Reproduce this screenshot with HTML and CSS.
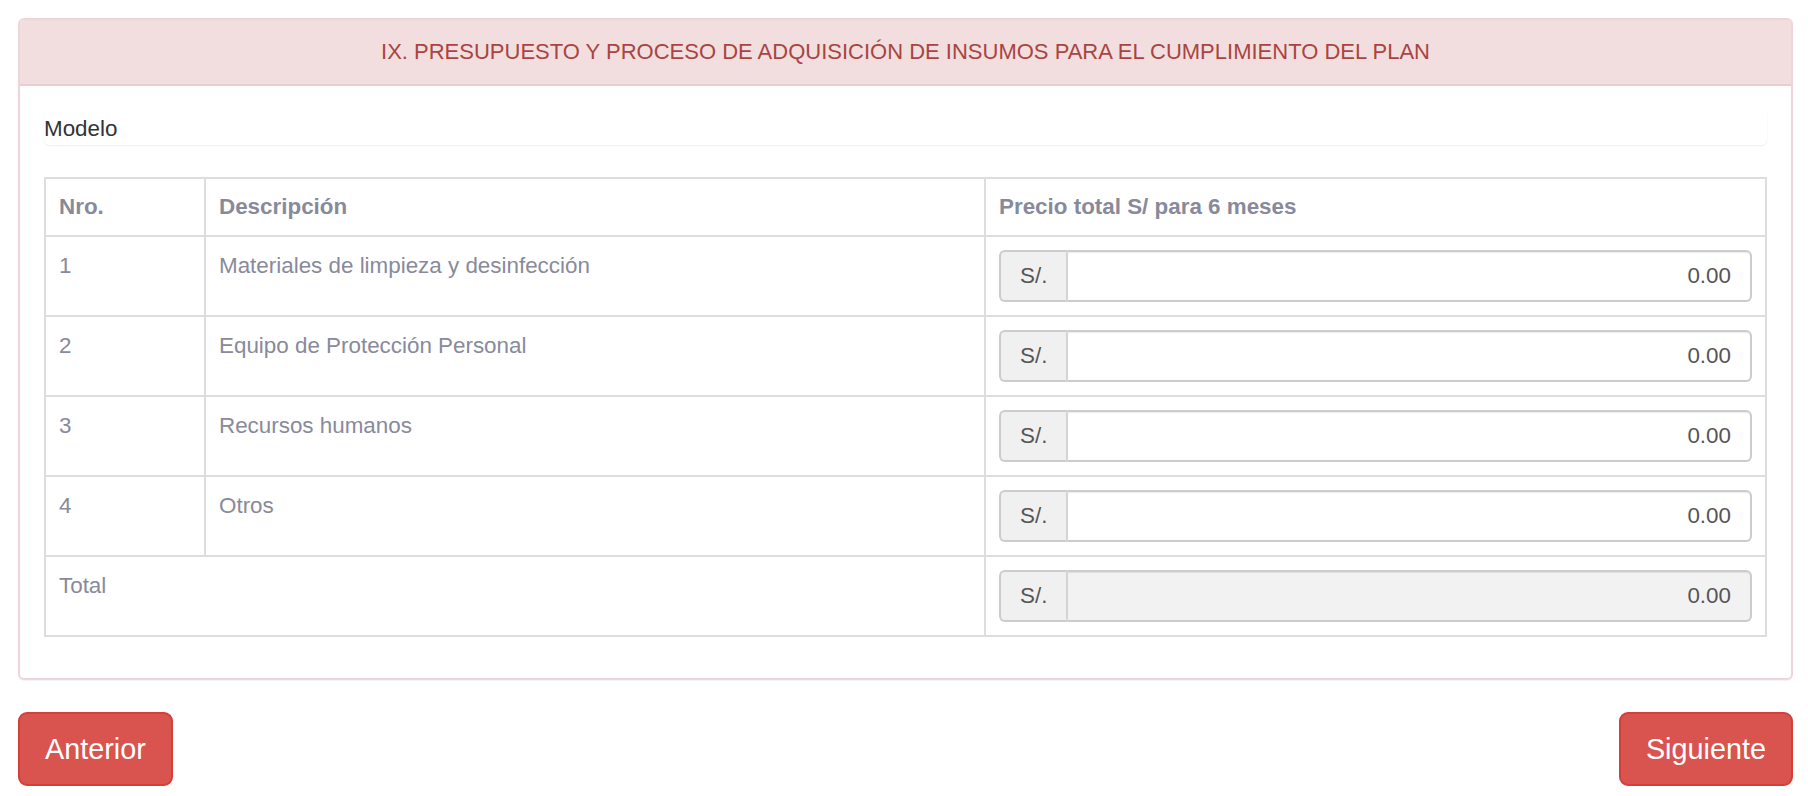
FILE: index.html
```html
<!DOCTYPE html>
<html lang="es">
<head>
    <meta charset="UTF-8">
    <meta name="viewport" content="width=device-width, initial-scale=1.0">
    <title>Presupuesto</title>
    <link rel="stylesheet" href="styles.css">
</head>
<body>
    <div class="page">
        <div class="panel panel-danger">
            <div class="panel-heading">IX. PRESUPUESTO Y PROCESO DE ADQUISICIÓN DE INSUMOS PARA EL CUMPLIMIENTO DEL PLAN</div>
            <div class="panel-body">
                <div class="model-box">Modelo</div>

                <table class="budget-table">
                    <thead>
                        <tr>
                            <th class="col-nro">Nro.</th>
                            <th class="col-desc">Descripción</th>
                            <th class="col-price">Precio total S/ para 6 meses</th>
                        </tr>
                    </thead>
                    <tbody>
                        <tr>
                            <td>1</td>
                            <td>Materiales de limpieza y desinfección</td>
                            <td>
                                <div class="input-group">
                                    <span class="input-group-addon">S/.</span>
                                    <input class="form-control" type="text" value="0.00">
                                </div>
                            </td>
                        </tr>
                        <tr>
                            <td>2</td>
                            <td>Equipo de Protección Personal</td>
                            <td>
                                <div class="input-group">
                                    <span class="input-group-addon">S/.</span>
                                    <input class="form-control" type="text" value="0.00">
                                </div>
                            </td>
                        </tr>
                        <tr>
                            <td>3</td>
                            <td>Recursos humanos</td>
                            <td>
                                <div class="input-group">
                                    <span class="input-group-addon">S/.</span>
                                    <input class="form-control" type="text" value="0.00">
                                </div>
                            </td>
                        </tr>
                        <tr>
                            <td>4</td>
                            <td>Otros</td>
                            <td>
                                <div class="input-group">
                                    <span class="input-group-addon">S/.</span>
                                    <input class="form-control" type="text" value="0.00">
                                </div>
                            </td>
                        </tr>
                        <tr>
                            <td colspan="2">Total</td>
                            <td>
                                <div class="input-group">
                                    <span class="input-group-addon">S/.</span>
                                    <input class="form-control" type="text" value="0.00" disabled>
                                </div>
                            </td>
                        </tr>
                    </tbody>
                </table>
            </div>
        </div>

        <div class="nav-buttons">
            <button class="btn btn-danger">Anterior</button>
            <button class="btn btn-danger">Siguiente</button>
        </div>
    </div>
</body>
</html>
```

FILE: styles.css
```css
body {
    margin: 0;
    font-family: "Liberation Sans", Arial, sans-serif;
    font-size: 22.4px;
    line-height: 32px;
    color: #333;
    background-color: #fff;
}

.page {
    padding: 18px 15px 0 18px;
}

.panel {
    border: 2px solid #efd5d9;
    border-radius: 6px;
    margin-bottom: 32px;
    background-color: #fff;
    box-shadow: 0 1px 1px rgba(0, 0, 0, 0.05);
}

.panel-heading {
    padding: 16px 24px;
    background-color: #f2dede;
    color: #a94442;
    border-bottom: 2px solid #ebccd1;
    border-radius: 4px 4px 0 0;
    text-align: center;
    font-size: 22px;
}

.panel-body {
    padding: 24px 24px 41px 24px;
}

.model-box {
    padding: 3px 0 0;
    border-radius: 6px;
    box-shadow: 0 1px 2px rgba(0, 0, 0, 0.07);
    margin-bottom: 32px;
}

.budget-table {
    width: 100%;
    border-collapse: collapse;
    border: 2px solid #dddddd;
    color: #888a9b;
}

.budget-table thead tr {
    border-top: 2px solid #e3e6ee;
}

.budget-table th,
.budget-table td {
    border: 2px solid #dddddd;
    text-align: left;
    vertical-align: top;
}

.budget-table th {
    padding: 12px 13px;
    font-weight: bold;
}

.budget-table td {
    padding: 13px 13px;
}

.col-nro {
    width: 132px;
}

.col-desc {
    width: 752px;
}

.input-group {
    display: flex;
    height: 52px;
}

.input-group-addon {
    display: flex;
    align-items: center;
    padding: 0 19px;
    color: #555;
    background-color: #f0f0f0;
    border: 2px solid #cccccc;
    border-right: 2px solid #d4d4d4;
    border-radius: 6px 0 0 6px;
}

.form-control {
    flex: 1;
    min-width: 0;
    margin: 0;
    padding: 0 19px;
    font-family: inherit;
    font-size: 22.4px;
    color: #555;
    text-align: right;
    background-color: #fff;
    border: 2px solid #cccccc;
    border-left: none;
    border-radius: 0 6px 6px 0;
    box-shadow: inset 0 1px 1px rgba(0, 0, 0, 0.075);
    outline: none;
}

.form-control:disabled {
    background-color: #f2f2f2;
    color: #555;
    -webkit-text-fill-color: #555;
    opacity: 1;
}

.nav-buttons {
    display: flex;
    justify-content: space-between;
}

.btn {
    padding: 16px 25px;
    font-family: inherit;
    font-size: 28.8px;
    line-height: 38px;
    border-radius: 9px;
    cursor: pointer;
}

.btn-danger {
    color: #fff;
    background-color: #d9534f;
    border: 2px solid #d43f3a;
}
```
